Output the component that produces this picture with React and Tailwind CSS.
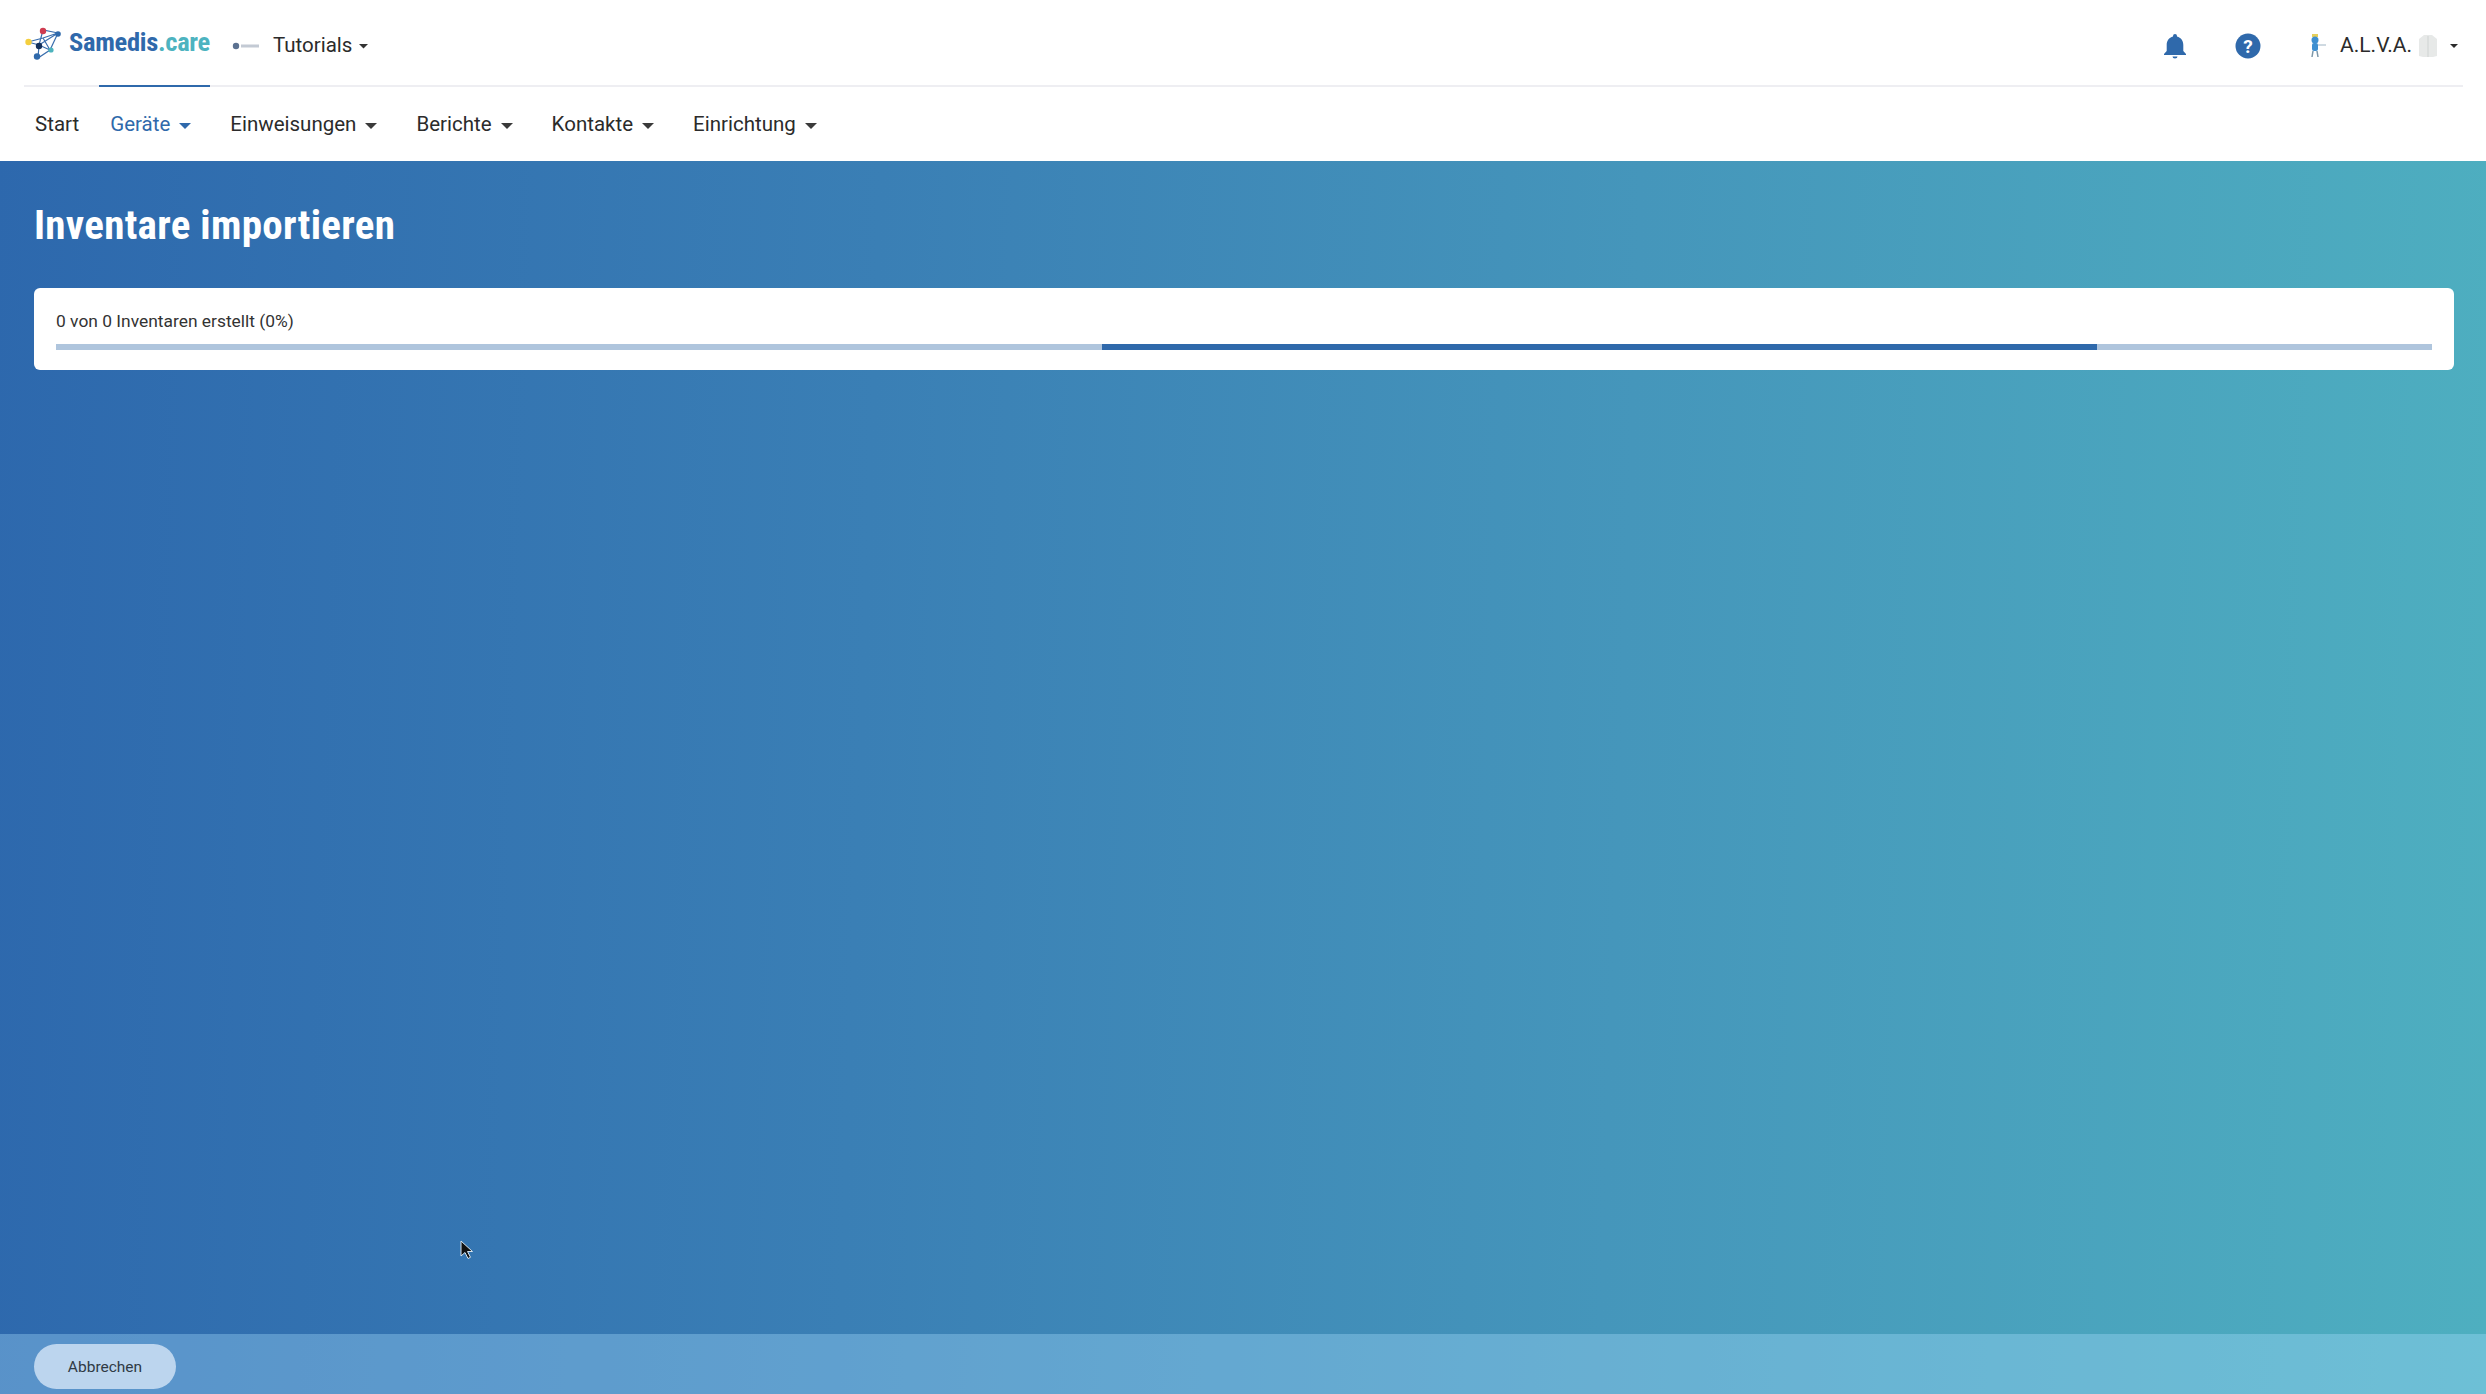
function Caret({ className = "", size = 12 }) {
  return (
    <svg width={size} height={size / 2} viewBox="0 0 12 6" className={className} fill="currentColor">
      <path d="M0 0h12L6 6z" />
    </svg>
  );
}

function Logo() {
  return (
    <svg width="38" height="34" viewBox="0 0 38 34" className="shrink-0">
      <g stroke="#3b6fae" strokeWidth="1.2" fill="none">
        <path d="M3 15L18 11L33 6L25 23L13 31L14 18L18 3L33 6M3 15L14 18L25 23M18 11L25 23M14 18L33 6" />
      </g>
      <circle cx="3.5" cy="15" r="3.2" fill="#f4cf3f" />
      <circle cx="18" cy="4" r="3.2" fill="#cf3c50" />
      <circle cx="33" cy="7" r="2.8" fill="#2f69ab" />
      <circle cx="14" cy="19" r="3.2" fill="#14305a" />
      <circle cx="26" cy="23" r="2.6" fill="#4db3bd" />
      <circle cx="12" cy="29.5" r="3.2" fill="#2f69ab" />
    </svg>
  );
}

function NavItem({ label, active, caret = true, className = "" }) {
  return (
    <div className={`flex items-center gap-[9px] px-[11px] h-[50px] ${active ? "text-[#2f69ab]" : "text-[#2b2b2b]"} ${className}`}>
      <span className="text-[20.5px] leading-none">{label}</span>
      {caret && <Caret className={active ? "text-[#2f69ab] mt-[3px]" : "text-[#3a3a3a] mt-[3px]"} />}
    </div>
  );
}

export default function App() {
  return (
    <div className="relative h-[1394px] w-full flex flex-col overflow-hidden font-['Roboto',sans-serif] bg-[linear-gradient(92deg,#2d68ad_0%,#3a7fb5_35%,#4596bb_65%,#4eafc0_100%)]">
      <header className="bg-white h-[161px] shrink-0 pl-[25px] pr-[23px]">
        <div className="h-[85px] flex items-center justify-between pr-[5px] pt-[3px]">
          <div className="flex items-center">
            <Logo />
            <span className="ml-[6px] text-[26.5px] font-bold tracking-[-0.3px] [font-stretch:75%] -mt-[5px] text-[#2f69ab]">
              Samedis<span className="text-[#4db3c0]">.care</span>
            </span>
            <svg width="28" height="10" viewBox="0 0 28 10" className="ml-[22px] mt-[3px]">
              <circle cx="4" cy="5" r="3.2" fill="#5b7190" />
              <rect x="9" y="3.5" width="18" height="3" fill="#c3cad4" />
            </svg>
            <span className="ml-[13px] mt-[3px] text-[20.5px] text-[#2b2b2b]">Tutorials</span>
            <Caret size={9} className="ml-[7px] mt-[5px] text-[#333]" />
          </div>
          <div className="flex items-center mt-[3px]">
            <svg width="24" height="26" viewBox="0 0 24 26" fill="#2f69ab">
              <path d="M12 1a2 2 0 0 1 2 2v.6c4 1 6.300 4.300 6.300 8.400v6l2.700 3v1H1v-1l2.700-3v-6c0-4.100 2.300-7.400 6.300-8.400V3a2 2 0 0 1 2-2zM9.500 23.500h5a2.500 2 0 0 1-5 0z" />
            </svg>
            <svg width="26" height="26" viewBox="0 0 26 26" className="ml-[48px]">
              <circle cx="13" cy="13" r="12.500" fill="#2f69ab" />
              <text x="13" y="20" textAnchor="middle" fontSize="19" fontWeight="700" fill="#fff" fontFamily="Roboto, sans-serif">?</text>
            </svg>
            <svg width="20" height="24" viewBox="0 0 20 24" className="ml-[46px]">
              <rect x="5" y="0" width="6" height="3" fill="#e6cf5a" />
              <circle cx="8" cy="6" r="3.500" fill="#3f8fd0" />
              <rect x="5" y="9" width="6" height="8" rx="2" fill="#3f8fd0" />
              <path d="M11 11h8" stroke="#9fb4c4" strokeWidth="1" />
              <path d="M6 17l-1 6M10 17l1 6" stroke="#7d97a8" strokeWidth="1.500" />
            </svg>
            <span className="ml-[13px] text-[21px] text-[#2b2b2b]">A.L.V.A.</span>
            <svg width="20" height="24" viewBox="0 0 20 24" className="ml-[6px]">
              <path d="M6 1h8l5 4v17l-4 1H5l-4-1V5z" fill="#e7e9e8" />
              <path d="M10 2v21" stroke="#cfd3d2" strokeWidth="1" />
            </svg>
            <Caret size={8} className="ml-[12px] text-[#2b2b2b]" />
          </div>
        </div>
        <div className="relative border-t-2 border-[#eeeef2] flex items-center gap-[17px] -ml-[1px] pt-[12px]">
          <div className="absolute -top-[2px] left-[75px] w-[111px] h-[2px] bg-[#2f69ab]" />
          <NavItem label="Start" caret={false} className="-mr-[8px]" />
          <NavItem label="Geräte" active />
          <NavItem label="Einweisungen" />
          <NavItem label="Berichte" />
          <NavItem label="Kontakte" />
          <NavItem label="Einrichtung" />
        </div>
      </header>

      <main className="flex-1 pl-[34px] pr-[32px]">
        <h1 className="text-white text-[41px] leading-none font-bold [font-stretch:75%] tracking-[0.3px] pt-[44px] h-[127px]">
          Inventare importieren
        </h1>
        <div className="bg-white rounded-[6px] h-[82px] px-[22px] pt-[23px]">
          <p className="text-[17.4px] leading-[20px] text-[#333]">0 von 0 Inventaren erstellt (0%)</p>
          <div className="mt-[13px] h-[6px] bg-[#afc5dd] relative overflow-hidden">
            <div className="absolute top-0 bottom-0 left-[1046px] w-[995px] bg-[#2f69ab]" />
          </div>
        </div>
      </main>

      <footer className="h-[60px] shrink-0 bg-[#a8e0ff]/35 px-[34px] pt-[10px]">
        <button className="w-[142px] h-[45px] pt-[2px] rounded-full bg-[#bcd5ee] text-[15.500px] text-[#2f3a45]">Abbrechen</button>
      </footer>

      <svg width="14" height="20" viewBox="0 0 14 20" className="absolute left-[459px] top-[1240px]">
        <path d="M2 1v15l4-3.500 3 6 2.500-1.200-3-5.800h5z" fill="#111" stroke="#d7e4ee" strokeWidth="1" />
      </svg>
    </div>
  );
}
